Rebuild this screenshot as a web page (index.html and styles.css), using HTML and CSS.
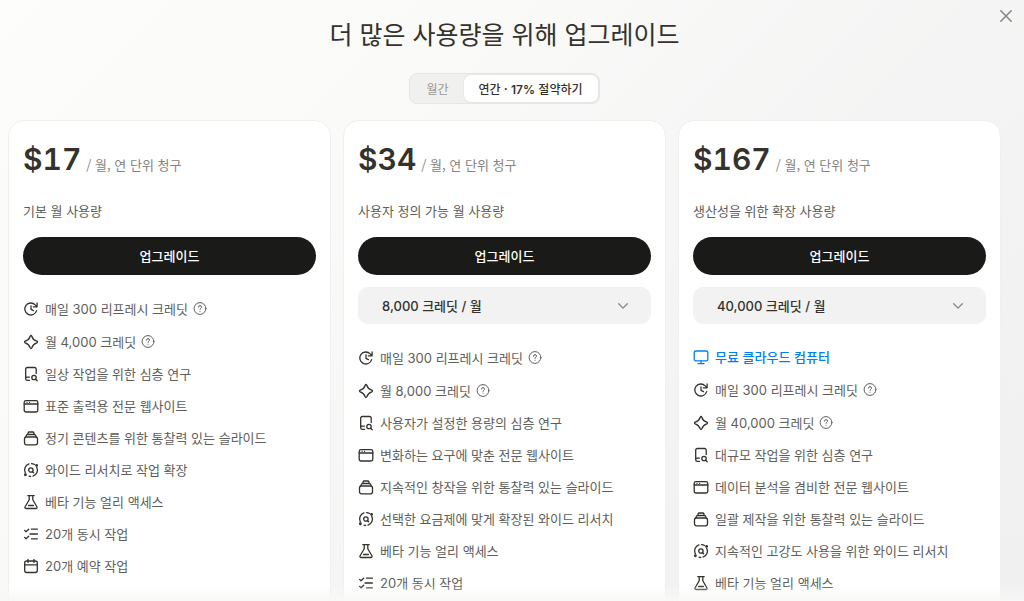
FILE: index.html
```
<!DOCTYPE html>
<html lang="ko">
<head>
<meta charset="utf-8">
<meta name="viewport" content="width=device-width, initial-scale=1">
<title>업그레이드</title>
<link rel="stylesheet" href="styles.css">
</head>
<body>
<svg class="sprite" aria-hidden="true">
  <symbol id="refresh" viewBox="0 0 16 16"><path d="M13.600 9.600A6 6 0 1 1 12.200 3.900L14 5.600M14.100 2v3.800h-3.800M8 4.800v3.600l2.400 1.200"/></symbol>
  <symbol id="spark" viewBox="0 0 16 16"><path d="M8 1.500c.4 0 .6.300.8.700C9.600 4.800 11.200 6.400 13.800 7.200c.4.200.7.400.7.800s-.3.600-.7.800C11.200 9.600 9.600 11.200 8.800 13.800c-.2.400-.4.700-.8.700s-.6-.3-.8-.7C6.400 11.200 4.800 9.600 2.200 8.800c-.4-.2-.7-.4-.7-.8s.3-.6.7-.8C4.800 6.400 6.400 4.800 7.200 2.200c.2-.4.400-.7.800-.7z"/></symbol>
  <symbol id="research" viewBox="0 0 16 16"><path d="M13.200 7.600V3a1.500 1.500 0 0 0-1.500-1.500H4.200A1.500 1.500 0 0 0 2.700 3v9.800a1.600 1.600 0 0 0 1.600 1.600h2.200M2.700 12.600c0-.9.700-1.500 1.600-1.500h2.200M12.700 13.200l1.500 1.500"/><circle cx="11" cy="11.500" r="2.200"/></symbol>
  <symbol id="web" viewBox="0 0 16 16"><rect x="1.200" y="2.600" width="13.600" height="11.400" rx="1.800"/><path d="M1.200 6h13.600M4 4.300h.1M6.500 4.300h.1"/></symbol>
  <symbol id="slides" viewBox="0 0 16 16"><rect x="1.500" y="7" width="13" height="7.800" rx="2"/><path d="M2.700 7l.9-1.900a1 1 0 0 1 .9-.6h7a1 1 0 0 1 .9.600l.9 1.900M4.700 4.500l.5-1.800a1 1 0 0 1 .9-.7h3.800a1 1 0 0 1 .9.700l.5 1.800"/></symbol>
  <symbol id="wide" viewBox="0 0 16 16"><path d="M6 1.900a6.400 6.400 0 0 0-3.700 9M10 14.100a6.400 6.400 0 0 0 3.700-9M7.600 14.500a6.400 6.400 0 0 1-1.500-.3M8.500 1.600a6.400 6.400 0 0 1 3 .9M9.400 9.500l1.200 1.200"/><circle cx="7.900" cy="8" r="2.200"/><circle cx="2.400" cy="12.800" r=".8"/><circle cx="13.600" cy="3.400" r=".8"/></symbol>
  <symbol id="flask" viewBox="0 0 16 16"><path d="M4.800 1.600h6.400M6.200 1.600v4.100L2 13a1 1 0 0 0 .9 1.500h10.200A1 1 0 0 0 14 13L9.800 5.700V1.600M5.600 11.500h4.800"/></symbol>
  <symbol id="tasks" viewBox="0 0 16 16"><path d="M1.600 4.400 3 5.800l2.700-2.600M1.600 11.400 3 12.800l2.700-2.600M8.400 3.200h6M7 8h7.400M8.400 12.800h6"/></symbol>
  <symbol id="calendar" viewBox="0 0 16 16"><rect x="1.700" y="3" width="12.600" height="11.500" rx="2"/><path d="M1.700 6.800h12.600M5 1.400v3M11 1.400v3"/></symbol>
  <symbol id="monitor" viewBox="0 0 16 16"><rect x="1.200" y="2" width="13.600" height="9.800" rx="1.600"/><path d="M8 11.800v2.700M5 14.600h6"/></symbol>
  <symbol id="help" viewBox="0 0 14 14"><circle cx="7" cy="7" r="5.900"/><path d="M5.500 5.600A1.500 1.500 0 0 1 8.500 5.600C8.500 6.600 7 6.800 7 7.900M7 9.700v.1"/></symbol>
  <symbol id="chevron" viewBox="0 0 12 12"><path d="M1.700 3.800 6 8.100l4.300-4.300"/></symbol>
  <symbol id="close" viewBox="0 0 12 12"><path d="M.8.8l10.400 10.400M11.200.8.8 11.200"/></symbol>
</svg>

<main class="page">
  <button class="close" type="button" aria-label="닫기"><svg><use href="#close"/></svg></button>
  <h1 class="title">더 많은 사용량을 위해 업그레이드</h1>

  <div class="billing" role="group" aria-label="결제 주기">
    <button class="billing-option" type="button" aria-pressed="false">월간</button>
    <button class="billing-option active" type="button" aria-pressed="true">연간 · <span class="num">17%</span> 절약하기</button>
  </div>

  <div class="plans">
    <section class="plan">
      <p class="price"><strong class="amount">$17</strong><span class="period">/ 월, 연 단위 청구</span></p>
      <p class="summary">기본 월 사용량</p>
      <button class="upgrade" type="button">업그레이드</button>
      <ul class="features">
        <li><svg class="icon"><use href="#refresh"/></svg><span>매일 <span class="num">300</span> 리프레시 크레딧</span><button class="help" type="button" aria-label="도움말"><svg><use href="#help"/></svg></button></li>
        <li><svg class="icon"><use href="#spark"/></svg><span>월 <span class="num">4,000</span> 크레딧</span><button class="help" type="button" aria-label="도움말"><svg><use href="#help"/></svg></button></li>
        <li><svg class="icon"><use href="#research"/></svg><span>일상 작업을 위한 심층 연구</span></li>
        <li><svg class="icon"><use href="#web"/></svg><span>표준 출력용 전문 웹사이트</span></li>
        <li><svg class="icon"><use href="#slides"/></svg><span>정기 콘텐츠를 위한 통찰력 있는 슬라이드</span></li>
        <li><svg class="icon"><use href="#wide"/></svg><span>와이드 리서치로 작업 확장</span></li>
        <li><svg class="icon"><use href="#flask"/></svg><span>베타 기능 얼리 액세스</span></li>
        <li><svg class="icon"><use href="#tasks"/></svg><span><span class="num">20</span>개 동시 작업</span></li>
        <li><svg class="icon"><use href="#calendar"/></svg><span><span class="num">20</span>개 예약 작업</span></li>
      </ul>
    </section>

    <section class="plan">
      <p class="price"><strong class="amount">$34</strong><span class="period">/ 월, 연 단위 청구</span></p>
      <p class="summary">사용자 정의 가능 월 사용량</p>
      <button class="upgrade" type="button">업그레이드</button>
      <div class="credits">
        <select aria-label="월 크레딧"><option>8,000 크레딧 / 월</option></select>
        <svg class="chevron"><use href="#chevron"/></svg>
      </div>
      <ul class="features">
        <li><svg class="icon"><use href="#refresh"/></svg><span>매일 <span class="num">300</span> 리프레시 크레딧</span><button class="help" type="button" aria-label="도움말"><svg><use href="#help"/></svg></button></li>
        <li><svg class="icon"><use href="#spark"/></svg><span>월 <span class="num">8,000</span> 크레딧</span><button class="help" type="button" aria-label="도움말"><svg><use href="#help"/></svg></button></li>
        <li><svg class="icon"><use href="#research"/></svg><span>사용자가 설정한 용량의 심층 연구</span></li>
        <li><svg class="icon"><use href="#web"/></svg><span>변화하는 요구에 맞춘 전문 웹사이트</span></li>
        <li><svg class="icon"><use href="#slides"/></svg><span>지속적인 창작을 위한 통찰력 있는 슬라이드</span></li>
        <li><svg class="icon"><use href="#wide"/></svg><span>선택한 요금제에 맞게 확장된 와이드 리서치</span></li>
        <li><svg class="icon"><use href="#flask"/></svg><span>베타 기능 얼리 액세스</span></li>
        <li><svg class="icon"><use href="#tasks"/></svg><span><span class="num">20</span>개 동시 작업</span></li>
      </ul>
    </section>

    <section class="plan">
      <p class="price"><strong class="amount">$167</strong><span class="period">/ 월, 연 단위 청구</span></p>
      <p class="summary">생산성을 위한 확장 사용량</p>
      <button class="upgrade" type="button">업그레이드</button>
      <div class="credits">
        <select aria-label="월 크레딧"><option>40,000 크레딧 / 월</option></select>
        <svg class="chevron"><use href="#chevron"/></svg>
      </div>
      <ul class="features">
        <li class="highlight"><svg class="icon"><use href="#monitor"/></svg><span>무료 클라우드 컴퓨터</span></li>
        <li><svg class="icon"><use href="#refresh"/></svg><span>매일 <span class="num">300</span> 리프레시 크레딧</span><button class="help" type="button" aria-label="도움말"><svg><use href="#help"/></svg></button></li>
        <li><svg class="icon"><use href="#spark"/></svg><span>월 <span class="num">40,000</span> 크레딧</span><button class="help" type="button" aria-label="도움말"><svg><use href="#help"/></svg></button></li>
        <li><svg class="icon"><use href="#research"/></svg><span>대규모 작업을 위한 심층 연구</span></li>
        <li><svg class="icon"><use href="#web"/></svg><span>데이터 분석을 겸비한 전문 웹사이트</span></li>
        <li><svg class="icon"><use href="#slides"/></svg><span>일괄 제작을 위한 통찰력 있는 슬라이드</span></li>
        <li><svg class="icon"><use href="#wide"/></svg><span>지속적인 고강도 사용을 위한 와이드 리서치</span></li>
        <li><svg class="icon"><use href="#flask"/></svg><span>베타 기능 얼리 액세스</span></li>
      </ul>
    </section>
  </div>
  <div class="fade"></div>
</main>
</body>
</html>
```
FILE: styles.css
```
* { box-sizing: border-box; }

body {
  margin: 0;
  color: #34322d;
  font: 400 13px/20px "Noto Sans CJK KR", Inter, sans-serif;
}

button, select { font: inherit; color: inherit; border: 0; padding: 0; background: none; }
h1, p, ul { margin: 0; padding: 0; }
svg { display: block; fill: none; stroke: currentColor; stroke-linecap: round; stroke-linejoin: round; }
.sprite { position: absolute; width: 0; height: 0; }
.num { font-family: Inter, sans-serif; }

.page {
  position: relative;
  display: flex;
  flex-direction: column;
  align-items: center;
  height: 100vh;
  padding: 15px 23px 0 8px;
  overflow: hidden;
  background: linear-gradient(135deg, #fdfdfc 0%, #f9f9f8 35%, #f3f3f3 70%, #f0f0f0 100%);
}

.close { position: absolute; top: 10px; right: 12px; color: #858481; }
.close svg { width: 12px; height: 12px; stroke-width: 1.5; }

.title { font-size: 25px; font-weight: 400; line-height: 36px; }

.billing {
  display: flex;
  flex: none;
  margin: 22px 0 16px;
  padding: 1px;
  border: 1px solid #e6e6e5;
  border-radius: 8px;
  background: #f0f0ef;
}
.billing-option { padding: 0 15px; border-radius: 7px; font-size: 12px; line-height: 27px; color: #9a9996; }
.billing-option.active { background: #fff; color: #34322d; font-weight: 500; box-shadow: 0 0 2px #0000001f; }
.active .num { font-weight: 600; line-height: 20px; }

.plans { display: grid; grid-template-columns: repeat(3, 1fr); gap: 12px; width: 100%; }

.plan {
  display: flex;
  flex-direction: column;
  min-height: 520px;
  padding: 18px 14px;
  border: 1px solid #f0f0ef;
  border-radius: 16px;
  background: #fff;
}

.price { display: flex; align-items: baseline; gap: 5px; color: #858481; }
.amount { font: 600 30px/40px Inter, sans-serif; font-variant-numeric: tabular-nums; color: #34322d; }
.summary { margin-top: 22px; color: #5e5e5b; }

.upgrade {
  margin-top: 16px;
  border-radius: 19px;
  background: #1a1a19;
  color: #fff;
  font-weight: 500;
  line-height: 38px;
}

.credits { position: relative; margin-top: 12px; color: #34322d; }
.credits select {
  display: block;
  width: 100%;
  height: 37px;
  padding: 0 24px;
  border-radius: 10px;
  appearance: none;
  background: #f2f2f2;
  font-family: Inter, "Noto Sans CJK KR", sans-serif;
  font-weight: 500;
}
.chevron { position: absolute; top: 13px; right: 22px; width: 12px; height: 12px; color: #858481; stroke-width: 1.3; pointer-events: none; }

.features { display: flex; flex-direction: column; gap: 12px; margin-top: 23px; list-style: none; color: #5e5e5b; }
.features li { display: flex; align-items: center; min-height: 20px; }
.icon { width: 16px; height: 16px; margin-right: 6px; color: #34322d; stroke-width: 1.3; }
.help { margin-left: 5px; }
.help svg { width: 14px; height: 21px; }
.features .highlight, .highlight .icon { color: #0081f2; font-weight: 500; }

.fade {
  position: absolute;
  right: 0;
  bottom: 0;
  left: 0;
  height: 16px;
  background: linear-gradient(#f8f8f700, #f8f8f7);
  pointer-events: none;
}
```
